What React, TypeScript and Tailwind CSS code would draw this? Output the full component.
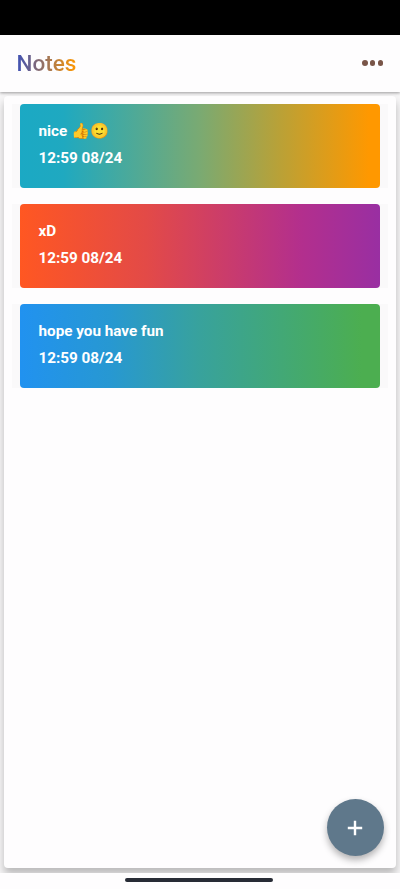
import React from "react";

type Note = { text: string; emoji?: string; time: string; tone: string };

const notes: Note[] = [
  { text: "nice ", emoji: "👍🙂", time: "12:59 08/24", tone: "bg-[linear-gradient(90deg,#1ba9c4_0%,#1fa9c0_12%,#7aaa72_50%,#b9a137_72%,#ff9800_97%)]" },
  { text: "xD", time: "12:59 08/24", tone: "bg-[linear-gradient(90deg,#ff5722_0%,#e34a47_35%,#b32f8d_78%,#992fa2_100%)]" },
  { text: "hope you have fun", time: "12:59 08/24", tone: "bg-[linear-gradient(90deg,#2192f0_0%,#2798d2_25%,#38a29c_50%,#4cae50_95%)]" },
];

function NoteCard({ note }: { note: Note }) {
  return (
    <div className="bg-[#faf9fa] px-2">
      <article className={`flex h-[83.5px] flex-col rounded-[4px] pl-[18.5px] pt-[14px] text-[15.25px] font-bold leading-[26.7px] text-white ${note.tone}`}>
        <p className="whitespace-pre">
          {note.text}
          {note.emoji && <span className="font-['Noto_Color_Emoji',sans-serif] font-normal">{note.emoji}</span>}
        </p>
        <p>{note.time}</p>
      </article>
    </div>
  );
}

export default function App() {
  return (
    <div className="flex h-[889px] w-[400px] flex-col overflow-hidden bg-[#fefdfe] font-[Roboto,sans-serif]">
      <div className="h-[34.5px] shrink-0 bg-black" />
      <header className="relative z-10 flex h-[57px] shrink-0 items-center justify-between bg-[#fefdfe] pl-[16.5px] pr-[17px] shadow-[0_1px_3px_rgba(0,0,0,0.38)]">
        <h1 className="-mt-[1px] bg-[linear-gradient(90deg,#3f51b5,#ff9800)] bg-clip-text text-[22.5px] font-medium leading-[28px] text-transparent">Notes</h1>
        <button aria-label="More" className="flex gap-[2.2px]">
          <span className="size-[5.4px] rounded-full bg-[#795548]" />
          <span className="size-[5.4px] rounded-full bg-[#795548]" />
          <span className="size-[5.4px] rounded-full bg-[#795548]" />
        </button>
      </header>
      <div className="h-[781px] shrink-0 overflow-hidden bg-[#f7f6f7] px-1 pt-1">
        <main className="relative flex h-[772.5px] flex-col gap-[16.7px] rounded-[4px] bg-[#fefdfe] px-2 pt-[8.5px] shadow-[0_6px_8px_rgba(0,0,0,0.25)]">
          {notes.map((note) => <NoteCard key={note.text} note={note} />)}
          <button aria-label="Add note" className="absolute bottom-[12px] right-[12.5px] flex size-[57px] items-center justify-center rounded-full bg-[#5f788b] shadow-[0_4px_7px_rgba(0,0,0,0.3)]">
            <svg viewBox="0 0 24 24" className="size-6" fill="white"><path d="M19.2 13.2h-6v6h-2.4v-6h-6v-2.4h6v-6h2.4v6h6z" /></svg>
          </button>
        </main>
      </div>
      <footer className="flex justify-center bg-[#fefdfe] pt-[5.5px]">
        <div className="ml-[-3px] h-[3.5px] w-[148px] rounded-full bg-[#272b35]" />
      </footer>
    </div>
  );
}
